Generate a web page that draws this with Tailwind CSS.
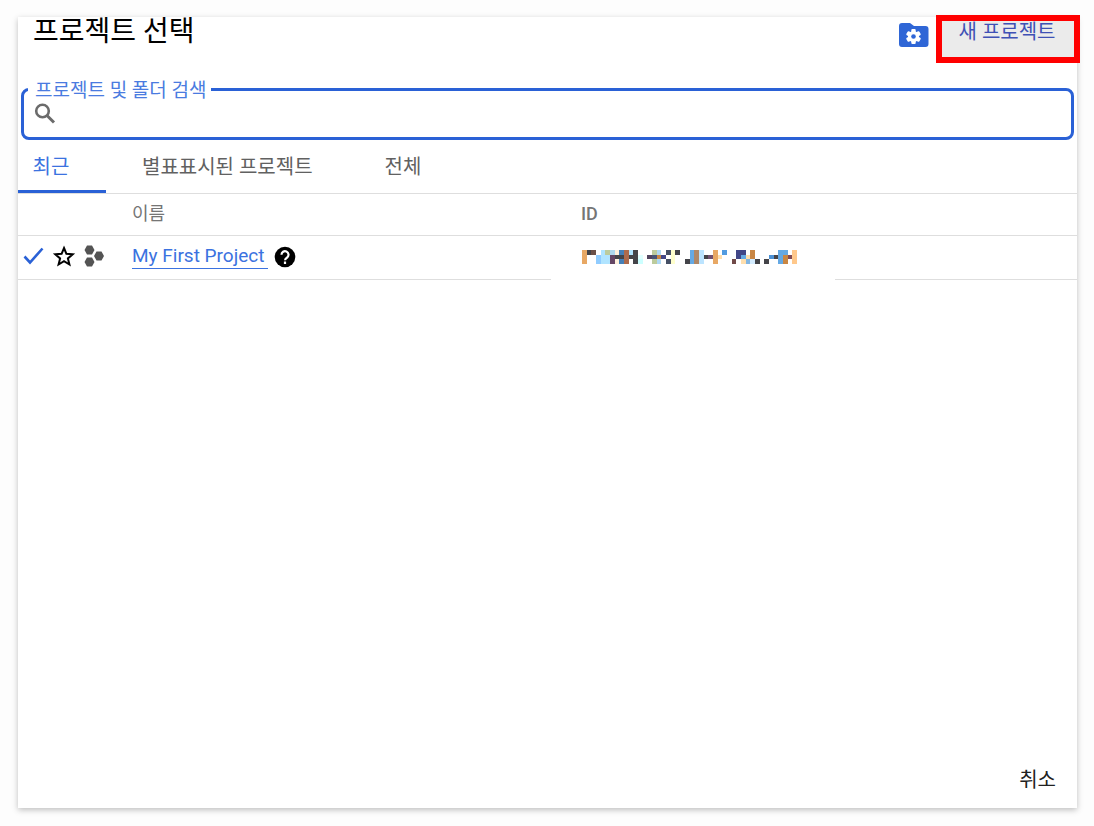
<!DOCTYPE html>
<html lang="ko">
<head>
<meta charset="utf-8">
<meta name="viewport" content="width=device-width, initial-scale=1">
<title>프로젝트 선택</title>
<script src="https://cdn.jsdelivr.net/npm/@tailwindcss/browser@4"></script>
</head>
<body class="flex min-h-screen flex-col bg-[#fdfdfd] pr-[17px] pl-[18px] pt-[17px] pb-[18px] font-[Roboto,'Noto_Sans_CJK_KR',sans-serif] text-black">
<main class="flex grow flex-col bg-white shadow-[0_2px_6px_rgba(0,0,0,0.25)]">
  <header class="flex h-[68px] items-start pr-[3px] pl-1">
    <h1 class="ml-[11px] text-[28px] leading-[30px]">프로젝트 선택</h1>
    <button type="button" aria-label="폴더 설정" class="mt-1 ml-auto">
      <svg class="h-7 w-[30px]" viewBox="0 0 30 28">
        <path fill="#2f66d6" d="M3 2h8l4 3h11.500q3 0 3 3v15q0 3-3 3H3q-3 0-3-3V5q0-3 3-3z"/>
        <g fill="#fff" transform="translate(14.500 15.500)">
          <circle r="5.500"/>
          <rect x="-2.200" y="-7.500" width="4.400" height="15" rx="1"/>
          <rect x="-2.200" y="-7.500" width="4.400" height="15" rx="1" transform="rotate(60)"/>
          <rect x="-2.200" y="-7.500" width="4.400" height="15" rx="1" transform="rotate(120)"/>
        </g>
        <circle cx="14.500" cy="15.500" r="2.300" fill="#2f66d6"/>
      </svg>
    </button>
    <button type="button" class="relative mt-1 ml-[13px] flex h-9 w-[132px] items-start justify-center bg-[#ebebeb] pr-[2px] text-xl leading-[22px] text-[#3f51b5]">새 프로젝트<span class="absolute -inset-[6px] border-[6px] border-[#ff0000]"></span></button>
  </header>

  <fieldset class="mx-[3px] -mt-2 rounded-lg border-[3px] border-[#2a61d6] pb-[10px]">
    <legend class="ml-1 px-[7px] pr-[5px] text-[19px] leading-5 text-[#4a7be0]"><label for="search" class="block pt-1 leading-5">프로젝트 및 폴더 검색</label></legend>
    <div class="flex h-[26px] items-center pl-[10px]">
      <svg class="h-6 w-6 shrink-0" viewBox="0 0 24 24" fill="none" stroke="#6b6b6b">
        <circle cx="8.500" cy="9" r="6.300" stroke-width="2.600"/>
        <path d="M13 13.500l7 7" stroke-width="3"/>
      </svg>
      <input id="search" type="text" class="h-6 min-w-0 grow bg-transparent px-2 text-lg outline-none">
    </div>
  </fieldset>

  <nav class="flex h-[54px] border-b border-[#dedede] text-xl text-[#616161]">
    <button type="button" class="w-[88px] border-b-[3px] border-[#2a61d6] pt-1 pr-[22px] text-[#3b72e0]">최근</button>
    <button type="button" class="ml-9 pt-1 pb-[3px]">별표표시된 프로젝트</button>
    <button type="button" class="ml-[72px] pt-1 pb-[3px]">전체</button>
  </nav>

  <table class="w-full table-fixed border-separate border-spacing-0 text-left text-lg">
    <colgroup><col class="w-[114px]"><col class="w-[419px]"><col class="w-[284px]"><col></colgroup>
    <thead class="text-[#757575]">
      <tr class="h-[42px]">
        <td class="border-b border-[#dedede]"></td>
        <th class="border-b border-[#dedede] pb-[2px] font-normal">이름</th>
        <th class="border-b border-[#dedede] pb-[2px] pl-[30px] font-medium">ID</th>
        <td class="border-b border-[#dedede]"></td>
      </tr>
    </thead>
    <tbody>
      <tr class="h-11">
        <td class="border-b border-[#dedede] pb-1">
          <div class="flex items-center pl-1">
            <svg class="h-6 w-6" viewBox="0 0 24 24" fill="none" stroke="#2a61d6" stroke-width="2.600"><path d="M2.500 12.500l5.500 6L20.500 4.500"/></svg>
            <button type="button" aria-label="별표표시" class="ml-[6px]">
              <svg class="h-6 w-6" viewBox="0 0 24 24" fill="none" stroke="#000" stroke-width="2"><path d="M12 4l2.400 5.800 6.300.500-4.800 4.100 1.500 6.100L12 17.200l-5.400 3.300 1.500-6.100-4.800-4.100 6.300-.500z"/></svg>
            </button>
            <svg class="ml-[6px] h-6 w-6" viewBox="0 0 24 24" fill="#545454"><path d="M5 1.500h5L12.500 6 10 10.500H5L2.500 6zM5 13.500h5l2.500 4.500-2.500 4.500H5L2.500 18zM14.500 7.500h5L22 12l-2.500 4.500h-5L12 12z"/></svg>
          </div>
        </td>
        <td class="border-b border-[#dedede]">
          <div class="flex items-center gap-[6px] pb-[2px]">
            <a href="#" class="border-b border-[#3b72e0] pr-1 text-[19px] leading-6 text-[#3b72e0]">My First Project</a>
            <svg class="h-[22px] w-[22px]" viewBox="0 0 22 22"><circle cx="11" cy="11" r="10.300"/><path d="M7.500 8.700a3.500 3.500 0 1 1 5.800 2.600c-1.300 1.100-2.200 1.500-2.200 3M11 15.500v2.400" fill="none" stroke="#fff" stroke-width="2.200"/></svg>
          </div>
        </td>
        <td class="pb-[3px] pl-[31px]"><svg id="masked-id" role="img" aria-label="숨겨진 ID" class="h-[14px] w-[215px]" viewBox="0 0 46 3" preserveAspectRatio="none" shape-rendering="crispEdges"></svg></td>
        <td class="border-b border-[#dedede]"></td>
      </tr>
    </tbody>
  </table>

  <footer class="mt-auto flex justify-end pr-[21px] pb-3">
    <button type="button" class="text-xl leading-8 text-[#212121]">취소</button>
  </footer>
</main>
<script>
  // Mosaic cells: [column, top, middle, bottom]
  const O = '#e8a864', K = '#444449', B = '#65a9e4', L = '#b0e4ff', G = '#bccb9c', P = '#654665',
        R = '#ae6a4b', C = '#ffdfae', N = '#414687', Y = '#ffffcc', S = '#4680b8', M = '#804b55', D = '#c98643';
  const cells = [
    [0,O,O,O],[1,K,0,0],[2,'#6b5048',0,0],[3,0,'#90ccff','#90ccff'],[4,L,L,L],[5,G,L,L],[6,'#aed8ee',P,P],
    [7,'#fff0dc',K,'#fff0dc'],[8,S,K,S],[9,R,R,R],[10,L,K,0],[11,K,K,K],[12,0,'#e0ffff','#ccffff'],
    [14,0,'#51455e',0],[15,G,'#465477',G],[16,'#aed8f4',D,'#aed8f4'],[17,0,N,0],[18,'#465065',0,'#465065'],[19,Y,Y,Y],[20,K,0,0],
    [22,0,0,K],[23,B,B,B],[24,'#b08867','#b08867','#b08867'],[25,'#bce4ff','#bce4ff','#bce4ff'],[26,0,K,0],[27,0,'#705070',0],
    [28,O,O,O],[29,0,C,0],[30,'#529be0',0,0],[32,0,0,'#704a48'],[33,N,N,0],[34,N,B,C],[35,0,C,'#82b5e1'],
    [36,D,D,'#d4ecff'],[37,0,0,K],[39,0,0,K],[40,0,'#4b91d5',0],[41,0,K,0],[42,B,B,B],[43,B,D,D],[44,0,M,0],
    [45,'#ffc88b','#ffc88b','#ffc88b']
  ];
  const svg = document.getElementById('masked-id');
  for (const [x, ...rows] of cells) rows.forEach((fill, y) => {
    if (!fill) return;
    const r = document.createElementNS('http://www.w3.org/2000/svg', 'rect');
    for (const [k, v] of Object.entries({ x, y, width: 1, height: 1, fill })) r.setAttribute(k, v);
    svg.append(r);
  });
</script>
</body>
</html>
